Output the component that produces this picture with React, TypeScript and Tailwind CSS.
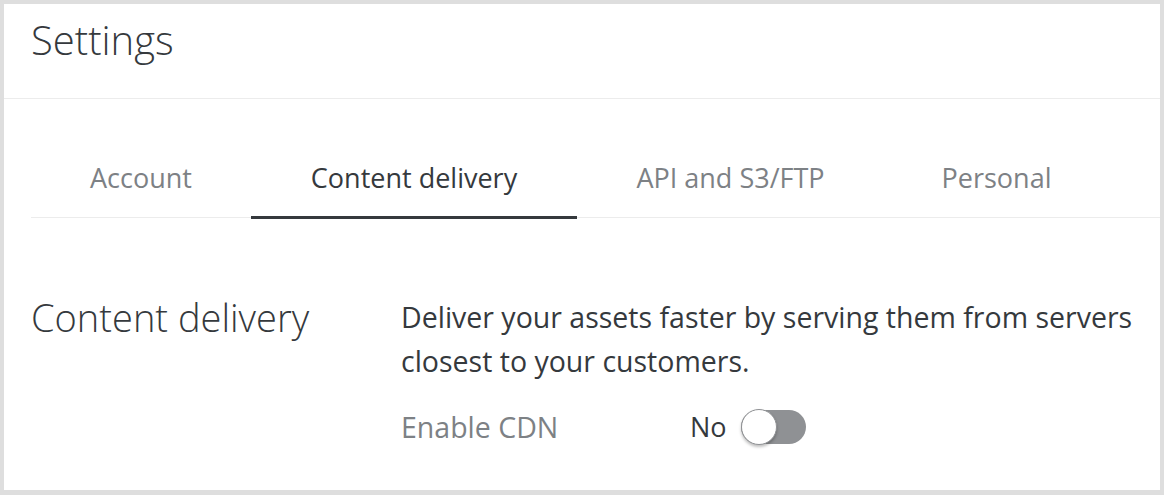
import { useState } from "react"

const tabs = [
  { label: "Account", width: "w-[220px]" },
  { label: "Content delivery", width: "w-[326px]" },
  { label: "API and S3/FTP", width: "w-[307px]" },
  { label: "Personal", width: "w-[225px]" },
]

export default function App() {
  const [active, setActive] = useState(1)
  const [cdn, setCdn] = useState(false)

  return (
    <div className="min-h-[495px] bg-[#dedede] pt-[4px] pl-[4px] pr-[4px] pb-[5px] font-['Open_Sans',sans-serif]">
      <div className="bg-white h-[486px] flex flex-col">
        <div className="h-[95px] border-b border-[#ececec] px-[27px] pt-[16px]">
          <h1 className="text-[40px] font-light text-[#35393d] leading-none">Settings</h1>
        </div>

        <div className="pl-[27px] pt-[40px]">
          <div className="flex border-b border-[#ececec]">
            {tabs.map((t, i) => (
              <button
                key={t.label}
                onClick={() => setActive(i)}
                className={`relative h-[78px] ${t.width} flex items-center justify-center text-[27px] cursor-pointer ${
                  i === active ? "text-[#35393d]" : "text-[#7d8185]"
                }`}
              >
                {t.label}
                {i === active && (
                  <span className="absolute left-0 right-0 -bottom-[2px] h-[3px] bg-[#35393d]" />
                )}
              </button>
            ))}
          </div>

          <div className="flex pt-[77px]">
            <h2 className="w-[370px] shrink-0 text-[38px] font-light text-[#35393d] leading-[45px]">
              Content delivery
            </h2>
            <div className="flex-1 pr-[20px]">
              <p className="text-[28.5px] leading-[44px] text-[#35393d]">
                Deliver your assets faster by serving them from servers closest to your customers.
              </p>
              <div className="flex items-center mt-[23px]">
                <span className="w-[289px] text-[28.5px] text-[#7d8185]">Enable CDN</span>
                <span className="text-[27px] text-[#35393d] mr-[14px]">{cdn ? "Yes" : "No"}</span>
                <button
                  onClick={() => setCdn(!cdn)}
                  className={`relative w-[65px] h-[34px] rounded-full cursor-pointer ${
                    cdn ? "bg-[#35393d]" : "bg-[#8f9194]"
                  }`}
                >
                  <span
                    className={`absolute top-[-1px] w-[36px] h-[36px] rounded-full bg-white border border-[#8f9194] shadow-[0_2px_3px_rgba(0,0,0,0.25)] ${
                      cdn ? "left-[29px]" : "left-0"
                    }`}
                  />
                </button>
              </div>
            </div>
          </div>
        </div>
      </div>
    </div>
  )
}
